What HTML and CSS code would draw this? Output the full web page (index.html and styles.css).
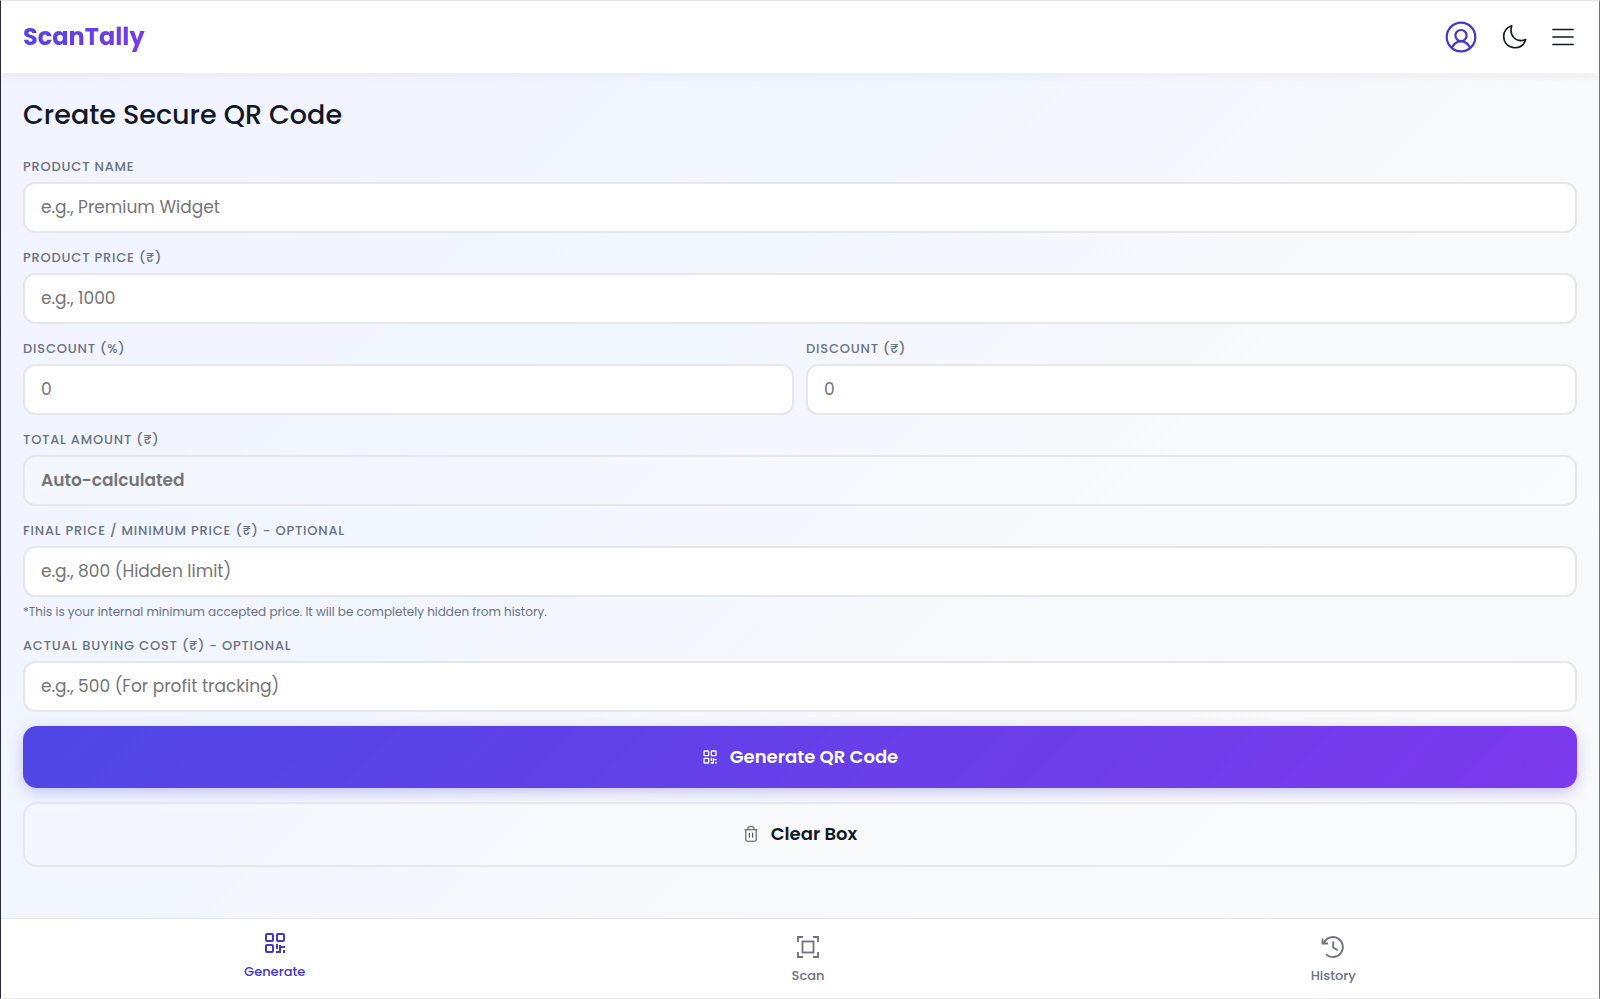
FILE: index.html
```html
<!DOCTYPE html>
<html lang="en">
<head>
<meta charset="utf-8">
<meta name="viewport" content="width=device-width, initial-scale=1">
<title>ScanTally</title>
<link rel="stylesheet" href="styles.css">
</head>
<body>
<svg class="sprite" aria-hidden="true">
  <symbol id="qr" viewBox="0 0 24 24">
    <g fill="none" stroke="currentColor" stroke-width="2">
      <rect x="3" y="3" width="7" height="7" rx="1"/>
      <rect x="14" y="3" width="7" height="7" rx="1"/>
      <rect x="3" y="14" width="7" height="7" rx="1"/>
      <path d="M14 13v5M13 21h4v-7M17 16h5M21 19v3"/>
    </g>
  </symbol>
</svg>
<div class="app">
  <header class="topbar">
    <span class="brand">ScanTally</span>
    <div class="actions">
      <button class="icon-btn profile" type="button" aria-label="Profile">
        <svg width="32" height="32" viewBox="0 0 32 32" fill="none" stroke="currentColor" stroke-width="2.200"><circle cx="16" cy="16" r="14.3"/><circle cx="16" cy="14.6" r="5.6"/><path d="M7 26.6c1.8-4 4.8-6.3 9-6.3s7.200 2.300 9 6.300"/></svg>
      </button>
      <button class="icon-btn" type="button" aria-label="Dark mode">
        <svg width="26" height="26" viewBox="0 0 26 26" fill="none" stroke="currentColor" stroke-width="1.600" stroke-linejoin="round"><path d="M10.800 1.800C5.800 3.400 2.700 7.400 2.700 12.600c0 6.300 4.700 11.200 11 11.200 5.200 0 9.400-3 11-8.200-1.600.7-3 1-4.600 1C14.300 16.600 10 12.300 10 6.600c0-1.600.3-3.200.8-4.800z"/></svg>
      </button>
      <button class="icon-btn" type="button" aria-label="Menu">
        <svg width="26" height="26" viewBox="0 0 26 26" fill="none" stroke="currentColor" stroke-width="1.700" stroke-linecap="round"><path d="M2 5.500h20M2 13h20M2 20.500h20"/></svg>
      </button>
    </div>
  </header>

  <main class="content">
    <h1 class="title">Create Secure QR Code</h1>
    <form class="form">
      <div class="field">
        <label for="name">Product Name</label>
        <input id="name" type="text" placeholder="e.g., Premium Widget">
      </div>
      <div class="field">
        <label for="price">Product Price (₹)</label>
        <input id="price" type="text" placeholder="e.g., 1000">
      </div>
      <div class="row">
        <div class="field">
          <label for="disc-pct">Discount (%)</label>
          <input id="disc-pct" type="text" placeholder="0">
        </div>
        <div class="field">
          <label for="disc-amt">Discount (₹)</label>
          <input id="disc-amt" type="text" placeholder="0">
        </div>
      </div>
      <div class="field">
        <label for="total">Total Amount (₹)</label>
        <input id="total" class="readonly" type="text" placeholder="Auto-calculated" readonly>
      </div>
      <div class="field">
        <label for="final">Final Price / Minimum Price (₹) - Optional</label>
        <input id="final" type="text" placeholder="e.g., 800 (Hidden limit)">
        <small class="hint">*This is your internal minimum accepted price. It will be completely hidden from history.</small>
      </div>
      <div class="field">
        <label for="cost">Actual Buying Cost (₹) - Optional</label>
        <input id="cost" type="text" placeholder="e.g., 500 (For profit tracking)">
      </div>
      <div class="buttons">
        <button class="btn primary" type="button">
          <svg width="16" height="16"><use href="#qr"/></svg>Generate QR Code
        </button>
        <button class="btn ghost" type="button">
          <svg width="16" height="16" viewBox="0 0 16 16" fill="none" stroke="currentColor" stroke-width="1.100"><path d="M1.500 3.700h13M5 3.500V2.200c0-.8.500-1.400 1.300-1.400h3.400c.8 0 1.300.6 1.300 1.400v1.300M2.800 3.700v10c0 .9.600 1.500 1.500 1.500h7.400c.9 0 1.500-.6 1.500-1.500v-10M6.400 6.700v5M9.600 6.700v5"/></svg>Clear Box
        </button>
      </div>
    </form>
  </main>

  <nav class="tabs">
    <a class="tab active" href="#generate"><svg width="26" height="26" viewBox="-1 -1 26 26"><use href="#qr" width="24" height="24"/></svg>Generate</a>
    <a class="tab" href="#scan">
      <svg width="26" height="26" viewBox="0 0 26 26" fill="none" stroke="currentColor" stroke-width="1.800"><path d="M3 8V3h5M18 3h5v5M23 18v5h-5M8 23H3v-5"/><rect x="7.500" y="7.500" width="11" height="11"/></svg>Scan</a>
    <a class="tab" href="#history">
      <svg width="26" height="26" viewBox="0 0 26 26" fill="none" stroke="currentColor" stroke-width="1.800"><path d="M4 8.400A10 10 0 1 1 6 20.300M2.500 4.500v5h5.500M13.200 7.500v6l4.600 2.800"/></svg>History</a>
  </nav>
</div>
</body>
</html>
```
FILE: styles.css
```css
* { box-sizing: border-box; }

body {
  margin: 0;
  font-family: "Poppins", "Inter", "Noto Sans", sans-serif;
  color: #111827;
}

.sprite { display: none; }

.app {
  min-height: 100vh;
  display: flex;
  flex-direction: column;
  border: 1px solid #e9e9eb;
  border-left-color: #2b2c39;
  border-right-color: #77777b;
  background: linear-gradient(135deg, #f1f4ff 0%, #f2f6ff 40%, #f8f9fb 65%, #f9fafb 100%);
}

.topbar {
  display: flex;
  align-items: center;
  justify-content: space-between;
  height: 72px;
  padding: 0 22px 1px;
  background: #fff;
  box-shadow: 0 2px 10px rgba(0, 0, 0, 0.05);
}

.brand {
  font-size: 24px;
  font-weight: 700;
  line-height: 36px;
  background: linear-gradient(135deg, #4f46e5, #7c3aed);
  background-clip: text;
  color: transparent;
}

.actions { display: flex; align-items: center; gap: 24px; }

.icon-btn {
  display: flex;
  padding: 0;
  border: 0;
  background: none;
  color: #111827;
  cursor: pointer;
}

.icon-btn.profile { color: #4338ca; }

.content { flex: 1; padding: 22px 22px 48px; }

.title {
  margin: 0 0 21px;
  font-size: 27px;
  font-weight: 500;
  line-height: 40px;
}

.form { display: flex; flex-direction: column; gap: 14px; }

.row { display: grid; grid-template-columns: 1fr 1fr; gap: 12px; }

.field { display: flex; flex-direction: column; }

.field label {
  margin-bottom: 4px;
  font-size: 13px;
  font-weight: 500;
  line-height: 22px;
  letter-spacing: 0.8px;
  text-transform: uppercase;
  color: #6b7280;
}

.field input {
  width: 100%;
  height: 51px;
  padding: 0 16px 2px;
  border: 2px solid #e5e7eb;
  border-radius: 12px;
  background: #fff;
  font: 400 17px/24px "Poppins", "Inter", "Noto Sans", sans-serif;
  color: #111827;
}

.field input::placeholder { color: #757575; opacity: 1; }

.field .readonly { background: rgba(255, 255, 255, 0.2); font-weight: 600; }

.hint {
  margin-top: 6px;
  font-size: 12px;
  line-height: 18px;
  color: #6b7280;
}

.buttons { display: flex; flex-direction: column; gap: 14px; }

.btn {
  display: flex;
  align-items: center;
  justify-content: center;
  gap: 12px;
  padding: 19px 16px;
  border: 0;
  border-radius: 14px;
  font: 600 18px/24px "Poppins", "Inter", "Noto Sans", sans-serif;
  cursor: pointer;
}

.primary {
  background: linear-gradient(135deg, #4f46e5, #7c3aed);
  color: #fff;
  box-shadow: 0 4px 14px rgba(79, 70, 229, 0.3);
}

.ghost {
  padding: 18px 16px 19px;
  border: 2px solid #e5e7eb;
  background: rgba(255, 255, 255, 0.2);
  color: #111827;
}

.ghost svg { color: #4b5563; }

.tabs {
  display: flex;
  justify-content: space-around;
  align-items: center;
  height: 80px;
  border-top: 1px solid #e5e7eb;
  background: #fff;
}

.tab {
  display: flex;
  flex-direction: column;
  align-items: center;
  gap: 6px;
  padding-top: 2px;
  font-size: 13px;
  font-weight: 500;
  line-height: 20px;
  color: #6b7280;
  text-decoration: none;
}

.tab.active { padding-bottom: 8px; color: #4338ca; }
```
